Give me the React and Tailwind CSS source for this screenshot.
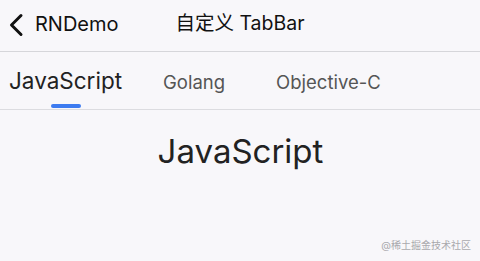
const tabs = ["JavaScript", "Golang", "Objective-C"];

const BackIcon = () => (
  <svg width="16" height="24" viewBox="0 0 16 24" fill="none">
    <path
      d="M13 2.5L3.5 12L13 21.5"
      stroke="#111"
      strokeWidth="3"
      strokeLinecap="round"
      strokeLinejoin="round"
    />
  </svg>
);

const App = () => {
  const active = 0;

  return (
    <div
      className="relative w-[480px] h-[261px] bg-[#f8f7fa] overflow-hidden"
      style={{ fontFamily: "Inter, 'Noto Sans CJK SC', sans-serif" }}
    >
      {/* Header */}
      <div className="grid grid-cols-3 items-center h-[52px] border-b border-[#d6d6da] pb-[3px]">
        <div className="flex items-center">
          <div className="ml-[8px] mt-[2px]">
            <BackIcon />
          </div>
          <span className="ml-[11px] text-[20px] leading-none text-[#111]">RNDemo</span>
        </div>
        <div className="justify-self-center whitespace-nowrap text-[19.5px] leading-none text-[#111]">
          自定义 TabBar
        </div>
        <div />
      </div>

      {/* Tabs */}
      <div className="relative flex items-end h-[58px] border-b border-[#dcdce0]">
        {tabs.map((tab, i) => (
          <div
            key={tab}
            className={
              i === 0 ? "ml-[9px] relative pb-[17px]" : i === 1 ? "ml-[41px] pb-[18px]" : "ml-[51px] pb-[18px]"
            }
          >
            <span
              className={
                i === active
                  ? "block text-[22.5px] leading-none text-[#222]"
                  : "block text-[18.5px] leading-none text-[#555]"
              }
            >
              {tab}
            </span>
            {i === active && (
              <div className="absolute left-1/2 -translate-x-1/2 bottom-[1px] w-[30px] h-[4px] rounded-full bg-[#3d7bf0]" />
            )}
          </div>
        ))}
      </div>

      {/* Content */}
      <div className="flex justify-center pt-[25px] pl-[1px]">
        <span className="text-[33px] leading-none text-[#222]">{tabs[active]}</span>
      </div>

      <div className="absolute right-[9px] top-[240px] text-[10px] leading-none text-[#a9a9ad]">
        @稀土掘金技术社区
      </div>
    </div>
  );
};

export default App;
